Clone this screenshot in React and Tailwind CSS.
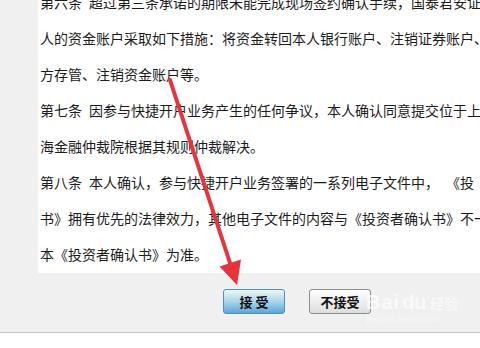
export default function App() {
  const lines = [
    "第六条\u2002超过第三条承诺的期限未能完成现场签约确认手续，国泰君安证",
    "人的资金账户采取如下措施：将资金转回本人银行账户、注销证券账户、",
    "方存管、注销资金账户等。",
    "第七条\u2002因参与快捷开户业务产生的任何争议，本人确认同意提交位于上",
    "海金融仲裁院根据其规则仲裁解决。",
    "第八条\u2002本人确认，参与快捷开户业务签署的一系列电子文件中，\u2002《投",
    "书》拥有优先的法律效力，其他电子文件的内容与《投资者确认书》不一",
    "本《投资者确认书》为准。",
  ];
  return (
    <div
      className="relative w-[480px] h-[348px] overflow-hidden bg-white"
      style={{ fontFamily: '"Noto Sans CJK SC", "Noto Sans", sans-serif' }}
    >
      <div className="h-[333px] bg-[#f0f0f0] border-b border-[#c4c4c4] overflow-hidden">
        <div className="ml-[38px] mt-[-16px] pb-[1px] bg-white pl-[2px] overflow-hidden whitespace-nowrap text-[14px] leading-[36px] text-[#1c1c1c]">
          {lines.map((l, i) => (
            <div key={i}>{l}</div>
          ))}
        </div>
        <div className="flex pl-[223px] pt-[16px] gap-[24px]">
          <button className="w-[62px] h-[25px] rounded-[3px] border border-[#4f8fbd] bg-gradient-to-b from-[#eef8f4] via-[#a9d6ea] to-[#5aa6d8] text-[13px] font-bold text-[#111] leading-none flex items-center justify-center">
            接 受
          </button>
          <button className="w-[62px] h-[25px] rounded-[3px] border border-[#8c8c8c] bg-gradient-to-b from-[#ffffff] to-[#dedede] text-[13px] font-bold text-[#111] leading-none flex items-center justify-center">
            不接受
          </button>
        </div>
      </div>

      <svg
        className="absolute inset-0 pointer-events-none"
        width="480"
        height="348"
        viewBox="0 0 480 348"
      >
        <line x1="170" y1="80" x2="231" y2="266" stroke="#e8333a" strokeWidth="4" strokeLinecap="round" />
        <polygon points="237,285 219.5,266.5 241,259.5" fill="#e8333a" />
      </svg>

      <div className="absolute left-[366px] top-[292px] pointer-events-none text-white/70 leading-none">
        <div className="flex items-end">
          <span className="text-[20px] font-bold tracking-[1px]" style={{ fontFamily: '"Liberation Sans", sans-serif' }}>Bai</span>
          <span className="text-[20px] font-bold ml-[2px]" style={{ fontFamily: '"Liberation Sans", sans-serif' }}>du</span>
          <span className="text-[14px] ml-[4px] mb-[2px]">经验</span>
        </div>
        <div className="text-[9px] mt-[3px] text-white/50" style={{ fontFamily: '"Liberation Sans", sans-serif' }}>jingyan.baidu.com</div>
      </div>
    </div>
  );
}
